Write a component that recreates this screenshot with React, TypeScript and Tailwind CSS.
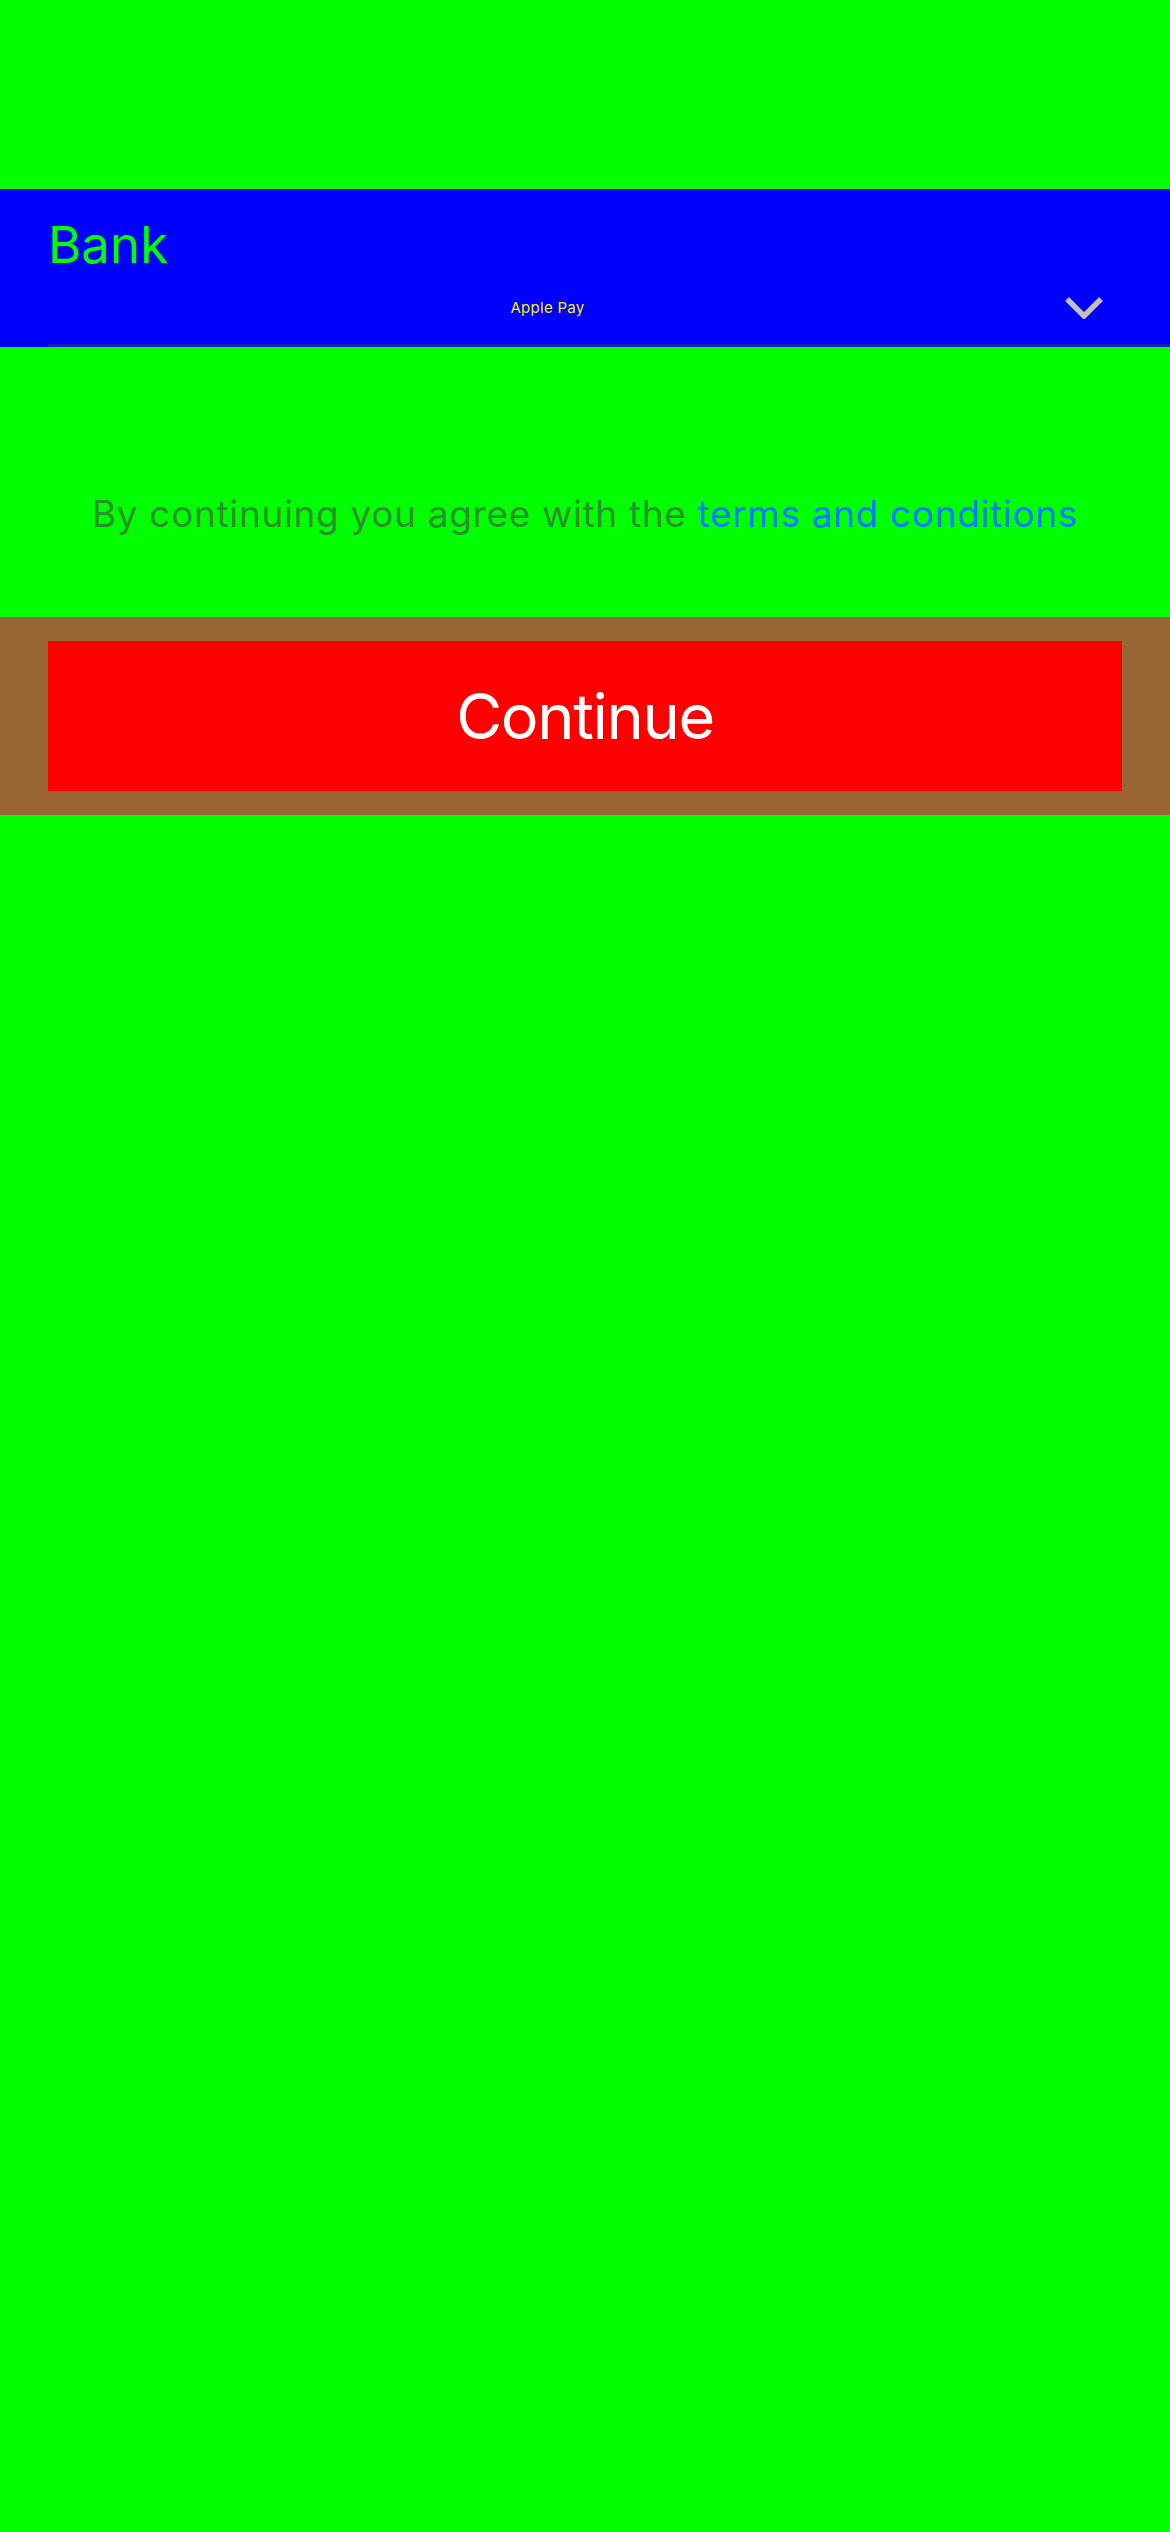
import React from "react";

export default function App() {
  return (
    <div className="min-h-[2532px] w-full bg-[#00ff00] font-['Inter',_'Roboto',_sans-serif]">
      <div className="h-[189px]" />
      <div className="bg-[#0000ff]">
        <div className="flex h-[155px] flex-col px-[48px]">
          <div className="pt-[30px] text-[51px] leading-[51px] text-[#00ff00]">Bank</div>
          <div className="mt-[27px] flex h-[22px] items-center">
            <div className="flex flex-1 justify-center pr-[18px]">
              <span className="text-[15px] leading-[18px] tracking-[0.3px] text-[#f0f000]">Apple Pay</span>
            </div>
            <svg width="38" height="22" viewBox="0 0 38 22" className="mr-[19px]">
              <path d="M2 2 L19 19 L36 2" fill="none" stroke="#c0c0c0" strokeWidth="5.5" strokeLinecap="butt" />
            </svg>
          </div>
        </div>
        <div className="ml-[48px] h-[3px] bg-[#1c1cc8]" />
      </div>
      <div className="h-[270px] pt-[144px]">
        <p className="text-center text-[37px] leading-[46px] tracking-[0.66px] whitespace-nowrap text-[#2a922c]">
          By continuing you agree with the <span className="text-[#0a7aff]">terms and conditions</span>
        </p>
      </div>
      <div className="bg-[#996633] px-[48px] py-[24px]">
        <button className="flex h-[150px] w-full items-center justify-center bg-[#ff0000] text-[63px] leading-[63px] tracking-[-1.3px] text-white">
          Continue
        </button>
      </div>
    </div>
  );
}
